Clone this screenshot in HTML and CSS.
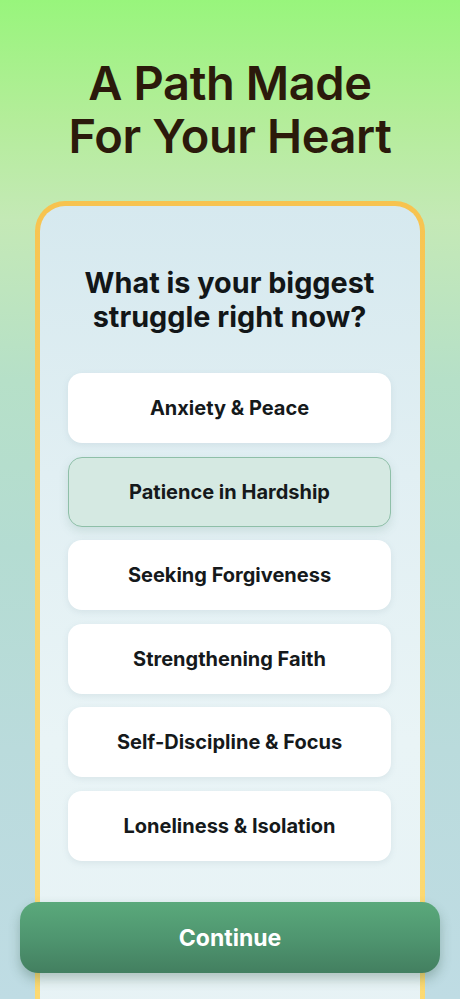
FILE: index.html
```html
<!DOCTYPE html>
<html lang="en">
<head>
<meta charset="utf-8">
<title>A Path Made For Your Heart</title>
<link rel="stylesheet" href="styles.css">
</head>
<body>
<div class="screen">
  <h1 class="title"><span class="line">A Path Made</span><span class="line">For Your Heart</span></h1>
  <div class="card">
    <div class="card-inner">
      <h2 class="question">What is your biggest<br>struggle right now?</h2>
      <div class="options">
        <div class="option">Anxiety &amp; Peace</div>
        <div class="option selected">Patience in Hardship</div>
        <div class="option">Seeking Forgiveness</div>
        <div class="option">Strengthening Faith</div>
        <div class="option">Self-Discipline &amp; Focus</div>
        <div class="option">Loneliness &amp; Isolation</div>
      </div>
    </div>
  </div>
  <button class="continue">Continue</button>
</div>
</body>
</html>
```
FILE: styles.css
```css
* { box-sizing: border-box; }
html, body { margin: 0; padding: 0; }
body {
  width: 460px;
  height: 999px;
  overflow: hidden;
  font-family: Inter, "Noto Sans", "Liberation Sans", sans-serif;
}
.screen {
  position: relative;
  width: 460px;
  height: 999px;
  overflow: hidden;
  background: linear-gradient(180deg, #98f57c 0%, #b4ed9a 12%, #c4e9b6 22%, #b6e0c8 38%, #b4dcd2 55%, #badbdc 75%, #bfdce4 100%);
  padding-top: 58px;
}
.title {
  margin: 0;
  display: flex;
  flex-direction: column;
  align-items: center;
  gap: 4px;
  font-size: 47px;
  line-height: 49px;
  font-weight: 600;
  color: #2b1a0b;
  letter-spacing: -0.4px;
}
.line { display: block; }
.card {
  margin: 41px 35px 0;
  width: 390px;
  height: 900px;
  border-radius: 30px;
  padding: 5px;
  background: linear-gradient(180deg, #f7c34f 0%, #fbd46a 40%, #fddb74 100%);
}
.card-inner {
  height: 100%;
  border-radius: 25px;
  background: linear-gradient(180deg, #d6e9ef 0%, #e1eff3 30%, #e9f4f6 60%, #e6f2f5 100%);
  padding: 60px 29px 0 28px;
}
.question {
  margin: 0;
  text-align: center;
  font-size: 28.8px;
  line-height: 34px;
  font-weight: 650;
  color: #121618;
}
.options {
  margin-top: 39px;
  display: flex;
  flex-direction: column;
  gap: 13.6px;
}
.option {
  height: 70px;
  border-radius: 14px;
  background: #ffffff;
  display: flex;
  align-items: center;
  justify-content: center;
  font-size: 20px;
  font-weight: 650;
  color: #15191b;
  box-shadow: 0 2px 6px rgba(120, 150, 160, 0.15);
}
.option.selected {
  background: #d5e9e2;
  border: 1px solid #8ebfa8;
  box-shadow: 0 4px 10px rgba(90, 140, 120, 0.18);
}
.continue {
  position: absolute;
  left: 20px;
  top: 902px;
  width: 420px;
  height: 71px;
  border: none;
  border-radius: 18px;
  background: linear-gradient(180deg, #5aa97b 0%, #4f9670 50%, #437f60 100%);
  color: #ffffff;
  font-family: Inter, "Noto Sans", "Liberation Sans", sans-serif;
  font-size: 23px;
  font-weight: 700;
  box-shadow: 0 6px 12px rgba(40, 80, 60, 0.3);
}
```
